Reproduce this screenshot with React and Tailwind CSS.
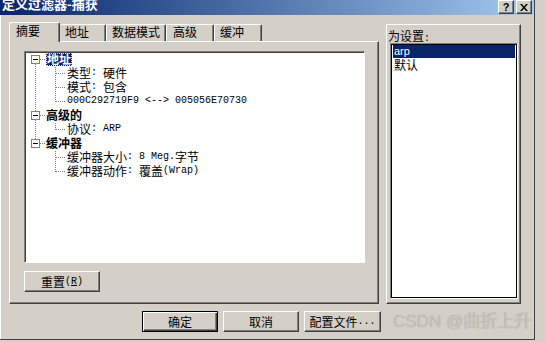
import React from "react";

const raised =
  "bg-[#d4d0c8] border border-t-white border-l-white border-r-[#404040] border-b-[#404040] shadow-[inset_-1px_-1px_0_#808080]";

function M({ children }) {
  return <span className="font-['Liberation_Mono',monospace] text-[10px]">{children}</span>;
}

const rows = [
  { lvl: 0, node: <span className="inline-flex h-[13px] items-center px-[1px] bg-[#0a246a] text-white font-bold outline outline-1 outline-dotted outline-[#f0e68c] -outline-offset-1">地址</span> },
  { lvl: 1, node: <>类型<M>: </M>硬件</> },
  { lvl: 1, node: <>模式<M>: </M>包含</> },
  { lvl: 1, node: <M>000C292719F9 &lt;--&gt; 005056E70730</M> },
  { lvl: 0, node: <span className="font-bold">高级的</span> },
  { lvl: 1, node: <>协议<M>: ARP</M></> },
  { lvl: 0, node: <span className="font-bold">缓冲器</span> },
  { lvl: 1, node: <>缓冲器大小<M>: 8 Meg.</M>字节</> },
  { lvl: 1, node: <>缓冲器动作<M>: </M>覆盖<M>(Wrap)</M></> },
];

function TreeLines() {
  const cy = (i) => 7.5 + 14 * i;
  const dot = { stroke: "#808080", strokeDasharray: "1 1", shapeRendering: "crispEdges" };
  const parents = [
    { p: 0, last: 3 },
    { p: 4, last: 5 },
    { p: 6, last: 8 },
  ];
  return (
    <svg className="absolute left-0 top-0" width="200" height="140">
      <line x1="10.5" y1={cy(0)} x2="10.5" y2={cy(6)} {...dot} />
      {parents.map(({ p, last }) => (
        <g key={p}>
          <line x1="15" y1={cy(p)} x2="21" y2={cy(p)} {...dot} />
          <line x1="30.5" y1={cy(p) + 7} x2="30.5" y2={cy(last)} {...dot} />
          {Array.from({ length: last - p }, (_, k) => (
            <line key={k} x1="31" y1={cy(p + k + 1)} x2="41" y2={cy(p + k + 1)} {...dot} />
          ))}
          <rect x="6.5" y={cy(p) - 4} width="8" height="8" fill="#fff" stroke="#808080" shapeRendering="crispEdges" />
          <line x1="8" y1={cy(p)} x2="13" y2={cy(p)} stroke="#000" shapeRendering="crispEdges" />
        </g>
      ))}
    </svg>
  );
}

function Tab({ label, w, pl, selected, first }) {
  return (
    <div
      className={`${w} ${pl} flex items-start bg-[#d4d0c8] border-t border-r border-t-white border-r-[#404040] rounded-t-[2px] shadow-[inset_-1px_0_0_#808080] ${
        selected ? "h-[20px] -mb-px relative z-10 pt-[1px] border-l border-l-white" : first ? "h-[17px]" : "h-[17px] border-l border-l-white"
      }`}
    >
      <span className="text-[12px] leading-[13px] text-black">{label}</span>
    </div>
  );
}

export default function App() {
  return (
    <div className="w-[545px] h-[342px] bg-[#d4d0c8] overflow-hidden relative font-['Noto_Sans_CJK_SC',sans-serif] text-black">
      <div className="w-[535px] h-[340px] border-r border-b border-[#404040] flex flex-col">
        {/* title bar */}
        <div className="h-[15px] flex items-start bg-gradient-to-r from-[#0a246a] to-[#a6caf0]">
          <div className="pl-[2px] -mt-[3px] text-[13px] leading-[14px] font-bold text-white">定义过滤器-捕获</div>
          <div className="ml-auto mr-[2px] flex gap-[2px]">
            <div className={`${raised} w-[16px] h-[14px] flex items-center justify-center text-[11px] leading-none font-bold font-['Liberation_Sans',sans-serif]`}>?</div>
            <div className={`${raised} w-[16px] h-[14px] flex items-center justify-center`}>
              <svg width="8" height="7" viewBox="0 0 8 7">
                <path d="M0 0h2l2 2.5 2-2.5h2l-3 3.5 3 3.5h-2l-2-2.5-2 2.5h-2l3-3.5z" fill="#000" />
              </svg>
            </div>
          </div>
        </div>

        {/* body */}
        <div className="flex-1 border-l border-white pl-[8px] pt-[7px]">
          <div className="flex items-start">
            {/* left tab control */}
            <div className="w-[370px]">
              <div className="h-[19px] flex items-end">
                <Tab label="摘要" w="w-[51px]" pl="pl-[6px]" selected />
                <Tab label="地址" w="w-[46px]" pl="pl-[5px]" first />
                <Tab label="数据模式" w="w-[60px]" pl="pl-[5px]" />
                <Tab label="高级" w="w-[48px]" pl="pl-[6px]" />
                <Tab label="缓冲" w="w-[48px]" pl="pl-[5px]" />
              </div>
              <div className="h-[263px] border border-t-white border-l-white border-r-[#404040] border-b-[#404040] shadow-[inset_-1px_-1px_0_#808080] pl-[14px] pt-[9px]">
                <div className="relative w-[341px] h-[212px] bg-white border border-t-[#808080] border-l-[#808080] border-r-white border-b-white shadow-[inset_1px_1px_0_#404040]">
                  <TreeLines />
                  <div className="relative flex flex-col">
                    {rows.map((r, i) => (
                      <div
                        key={i}
                        className={`h-[14px] flex items-center text-[12px] leading-[14px] whitespace-pre ${r.lvl === 0 ? "pl-[21px]" : "pl-[42px]"}`}
                      >
                        {r.node}
                      </div>
                    ))}
                  </div>
                </div>
                <div className={`${raised} mt-[8px] w-[76px] h-[21px] flex items-center justify-center text-[12px]`}>
                  重置<M>(<span className="underline">R</span>)</M>
                </div>
              </div>
            </div>

            {/* right group */}
            <div className="ml-[7px] mt-[2px] w-[135px] h-[280px] border border-t-white border-l-white border-r-[#404040] border-b-[#404040] shadow-[inset_-1px_-1px_0_#808080] pl-[3px]">
              <div className="pt-[4px] h-[18px] text-[12px] leading-[13px] -ml-[2px]">为设置<M>:</M></div>
              <div className="w-[128px] h-[256px] bg-white border border-t-[#808080] border-l-[#808080] border-r-white border-b-white shadow-[inset_0_0_0_1px_#000] p-[1px]">
                <div className="h-[13px] ml-[1px] mr-[1px] bg-[#0a246a] text-white text-[11px] leading-[13px] pl-[1px] font-['Liberation_Sans',sans-serif]">arp</div>
                <div className="h-[13px] pl-[2px] text-[12px] leading-[13px]">默认</div>
              </div>
            </div>
          </div>

          {/* bottom buttons */}
          <div className="mt-[7px] ml-[133px] flex gap-[5px]">
            <div className="w-[76px] h-[21px] bg-[#d4d0c8] border border-black shadow-[inset_1px_1px_0_#fff,inset_-1px_-1px_0_#404040,inset_-2px_-2px_0_#808080] flex items-center justify-center text-[12px]">确定</div>
            <div className={`${raised} w-[76px] h-[21px] flex items-center justify-center text-[12px]`}>取消</div>
            <div className={`${raised} w-[77px] h-[21px] flex items-center justify-center text-[12px]`}>
              配置文件<M>...</M>
            </div>
          </div>
        </div>
      </div>

      <div className="absolute left-[393px] top-[313px] text-[17px] leading-[18px] font-normal text-[#c6c2bc] [text-shadow:0_0_1px_#a6a29c] font-['Liberation_Sans','Noto_Sans_CJK_SC',sans-serif]">
        CSDN @曲折上升
      </div>
    </div>
  );
}
